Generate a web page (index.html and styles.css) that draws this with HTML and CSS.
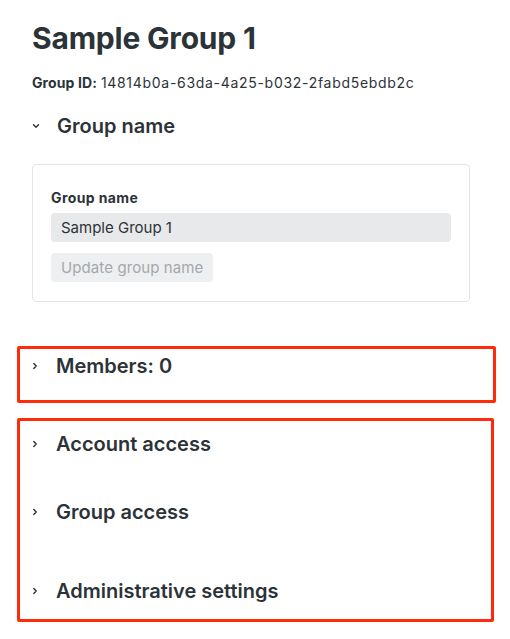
FILE: index.html
```html
<!DOCTYPE html>
<html lang="en">
<head>
<meta charset="utf-8">
<title>Sample Group 1</title>
<link rel="stylesheet" href="styles.css">
</head>
<body>
<main class="page">
  <h1 class="title">Sample Group 1</h1>
  <p class="group-id"><strong>Group ID:</strong> <span class="id-value">14814b0a-63da-4a25-b032-2fabd5ebdb2c</span></p>

  <section class="section">
    <h2 class="section-head">
      <svg class="chev" width="10" height="10" viewBox="0 0 10 10"><path d="M2.5 3.8 L5 6.2 L7.5 3.8" fill="none" stroke="#2c3338" stroke-width="1.4" stroke-linecap="round" stroke-linejoin="round"/></svg>
      <span>Group name</span>
    </h2>
    <div class="card">
      <label class="field-label" for="gname">Group name</label>
      <input class="field-input" id="gname" type="text" value="Sample Group 1" disabled>
      <button class="btn" type="button" disabled>Update group name</button>
    </div>
  </section>

  <section class="annot annot-members">
    <h2 class="section-head row-members">
      <svg class="chev" width="10" height="10" viewBox="0 0 10 10"><path d="M3.8 2.5 L6.2 5 L3.8 7.5" fill="none" stroke="#2c3338" stroke-width="1.4" stroke-linecap="round" stroke-linejoin="round"/></svg>
      <span>Members: 0</span>
    </h2>
  </section>

  <section class="annot annot-access">
    <h2 class="section-head row-account">
      <svg class="chev" width="10" height="10" viewBox="0 0 10 10"><path d="M3.8 2.5 L6.2 5 L3.8 7.5" fill="none" stroke="#2c3338" stroke-width="1.4" stroke-linecap="round" stroke-linejoin="round"/></svg>
      <span>Account access</span>
    </h2>
    <h2 class="section-head row-group">
      <svg class="chev" width="10" height="10" viewBox="0 0 10 10"><path d="M3.8 2.5 L6.2 5 L3.8 7.5" fill="none" stroke="#2c3338" stroke-width="1.4" stroke-linecap="round" stroke-linejoin="round"/></svg>
      <span>Group access</span>
    </h2>
    <h2 class="section-head row-admin">
      <svg class="chev" width="10" height="10" viewBox="0 0 10 10"><path d="M3.8 2.5 L6.2 5 L3.8 7.5" fill="none" stroke="#2c3338" stroke-width="1.4" stroke-linecap="round" stroke-linejoin="round"/></svg>
      <span>Administrative settings</span>
    </h2>
  </section>
</main>
</body>
</html>
```

FILE: styles.css
```css
* { box-sizing: border-box; }

html, body {
  margin: 0;
  padding: 0;
  background: #ffffff;
}

body {
  font-family: Inter, "Noto Sans", "Liberation Sans", sans-serif;
  color: #2c3338;
}

.page {
  padding: 20px 0 0 32px;
  width: 510px;
}

.title {
  margin: 0;
  font-size: 30px;
  line-height: 36px;
  font-weight: 700;
  letter-spacing: -0.2px;
}

.group-id {
  margin: 17px 0 0;
  font-size: 14px;
  line-height: 20px;
}

.group-id strong {
  font-weight: 700;
  letter-spacing: 0.1px;
}

.id-value {
  letter-spacing: 0.7px;
}

.section {
  margin-top: 19px;
}

.section-head {
  display: flex;
  align-items: center;
  margin: 0;
  height: 28px;
  font-size: 20px;
  line-height: 28px;
  font-weight: 600;
}

.chev {
  flex: none;
  margin-left: -1px;
  margin-right: 16px;
}

.card {
  display: flex;
  flex-direction: column;
  align-items: flex-start;
  margin-top: 24px;
  width: 438px;
  padding: 23px 18px 19px;
  border: 1px solid #e3e5e7;
  border-radius: 4px;
}

.field-label {
  font-size: 14px;
  line-height: 20px;
  font-weight: 700;
  letter-spacing: 0.4px;
}

.field-input {
  margin-top: 5px;
  width: 400px;
  height: 29px;
  padding: 0 10px;
  border: 0;
  border-radius: 4px;
  background: #e8e9eb;
  font-family: inherit;
  font-size: 15px;
  color: #2c3338;
}

.btn {
  margin-top: 11px;
  height: 29px;
  padding: 0 10px;
  border: 0;
  border-radius: 4px;
  background: #eeeff0;
  font-family: inherit;
  font-size: 15px;
  letter-spacing: 0.1px;
  color: #a4a8ac;
}

.annot {
  margin-left: -15px;
  border: 3px solid #ff2a0a;
  border-radius: 2px;
  padding-left: 11px;
}

.annot-members {
  margin-top: 44px;
  width: 479px;
  height: 57px;
  padding-top: 3px;
}

.annot-access {
  margin-top: 15px;
  width: 477px;
  height: 204px;
  padding-top: 9px;
}

.row-group {
  margin-top: 40px;
}

.row-admin {
  margin-top: 51px;
}
```
